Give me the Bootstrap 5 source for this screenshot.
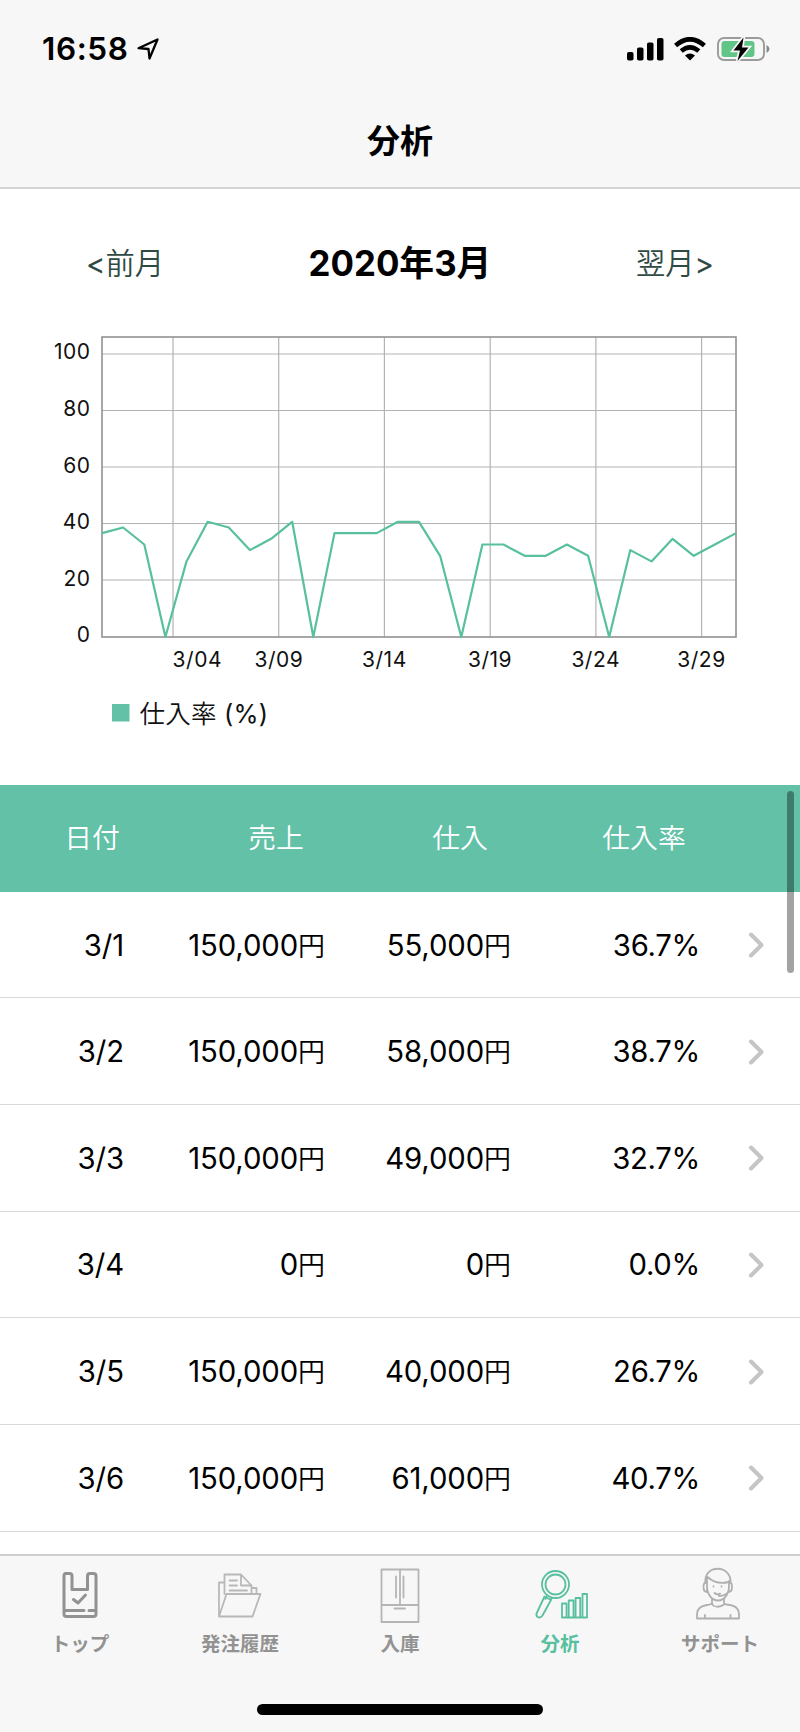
<!DOCTYPE html>
<html lang="ja">
<head>
<meta charset="utf-8">
<meta name="viewport" content="width=device-width, initial-scale=1">
<title>分析</title>
<link href="https://cdn.jsdelivr.net/npm/bootstrap@5.3.0/dist/css/bootstrap.min.css" rel="stylesheet">
<style>
  :root { --mint: #63c1a7; --mint-line: #58bf9f; --bar: #f7f7f7; }
  body { font-family: Inter, "Noto Sans CJK JP", sans-serif; color: #000; width: 800px; height: 1732px; overflow: hidden; background: #fff; }
  svg { display: block; flex: none; }
  .top-bar { height: 189px; background: var(--bar); border-bottom: 2px solid #d5d5d5; }
  .status-row { height: 98px; padding: 0 30px 0 42px; }
  .clock { font-size: 31.5px; font-weight: 600; line-height: 1; letter-spacing: .6px; }
  .page-title { font-size: 33px; font-weight: 700; line-height: 1; padding-top: 27px; }
  .month-row { height: 150px; padding: 0 86px 0 86px; font-size: 29.3px; color: #2f4a42; font-weight: 350; }
  .month-row b { font-weight: 400; }
  .month-row h2 { font-size: 34.8px; font-weight: 700; color: #000; }
  .chart-box { height: 446px; }
  .chart-box text { font-size: 21px; letter-spacing: .5px; fill: #111; }
  .grid-row { display: grid; grid-template-columns: repeat(4, 184px) 64px; align-items: center; height: 106.67px; }
  .head-row { background: var(--mint); color: #fff; font-size: 27.8px; font-weight: 350; text-align: center; padding-top: 2px; }
  .data-row { border-bottom: 1.5px solid #dadada; padding-top: 2px; font-size: 29.3px; text-align: right; letter-spacing: -.1px; }
  .data-row small { font-size: 27px; font-weight: 350; }
  .data-row > :nth-child(1) { padding-right: 60px; }
  .data-row > :nth-child(2) { padding-right: 43px; }
  .data-row > :nth-child(3) { padding-right: 41px; }
  .data-row > :nth-child(4) { padding-right: 36px; letter-spacing: -.3px; }
  .data-row svg { margin-left: 12px; margin-bottom: 1px; }
  .scroll-area { height: 769px; overflow: hidden; }
  .scroll-thumb { right: 6px; top: 6px; width: 7px; height: 182px; border-radius: 4px; background: rgba(0,0,0,.36); }
  .tab-bar { height: 178px; background: var(--bar); border-top: 2px solid #cfcfcf; }
  .tab-item { width: 160px; color: #929292; font-size: 19.5px; font-weight: 700; line-height: 28px; text-decoration: none; }
  .tab-item.active { color: var(--mint-line); }
  .tab-item svg { fill: none; stroke-linecap: round; stroke-linejoin: round; }
  .home-bar { width: 286px; height: 11px; border-radius: 6px; background: #000; margin-top: 46px; }
</style>
</head>
<body class="d-flex flex-column">
<header class="top-bar flex-shrink-0">
  <div class="status-row d-flex align-items-center justify-content-between">
    <div class="d-flex align-items-center">
      <span class="clock">16:58</span>
      <svg class="ms-2" width="24" height="24" viewBox="0 0 24 24"><path d="M1.500 11.200 20.500 2.500 12.500 21.500 11.500 12Z" fill="none" stroke="#000" stroke-width="2.300" stroke-linejoin="round"/></svg>
    </div>
    <div class="d-flex align-items-center">
      <svg width="37" height="24" viewBox="0 0 37 24"><rect x="0" y="15" width="6.500" height="8.500" rx="1.800"/><rect x="10" y="10.500" width="6.500" height="13" rx="1.800"/><rect x="20" y="5.500" width="6.500" height="18" rx="1.800"/><rect x="30" y="1" width="6.500" height="22.500" rx="1.800"/></svg>
      <svg class="ms-2" width="36" height="24" viewBox="0 0 36 24"><g fill="none" stroke="#000" stroke-width="4.600"><path d="M3.600 8.500Q18-4 32.400 8.500"/><path d="M9.200 14Q18 6.600 26.800 14"/></g><path d="M13 18.500Q18 14.500 23 18.500L18 23.500Z"/></svg>
      <svg class="ms-2" width="54" height="28" viewBox="0 0 54 28"><rect x="2" y="3" width="46" height="22" rx="6" fill="none" stroke="#9b9b9b" stroke-width="1.900"/><rect x="5.500" y="6" width="33" height="16" rx="3.200" fill="#62c588"/><path d="M50.500 10q3 1.500 3 4t-3 4Z" fill="#8a8a8a"/><path d="M27.500 2.500 17.500 15.500H24L21.500 26 32.500 12.500H26Z" stroke="#f7f7f7" stroke-width="3.500" paint-order="stroke"/></svg>
    </div>
  </div>
  <h1 class="page-title text-center m-0">分析</h1>
</header>

<nav class="month-row d-flex align-items-center justify-content-between flex-shrink-0">
  <span><b>&lt;</b>前月</span><h2 class="m-0">2020年3月</h2><span>翌月<b>&gt;</b></span>
</nav>

<section class="chart-box flex-shrink-0">
  <svg width="800" height="446" viewBox="0 339 800 446" style="overflow:visible">
    <g stroke="#b3b3b3" stroke-width="1.200">
      <path d="M102 354H736M102 410.500H736M102 467H736M102 523.500H736M102 580H736"/>
      <path d="M173 337V637M278.700 337V637M384.400 337V637M490.200 337V637M595.900 337V637M701.600 337V637"/>
    </g>
    <rect x="102" y="337" width="634" height="300" fill="none" stroke="#929292" stroke-width="1.600"/>
    <polyline id="rate" fill="none" stroke="#58bf9f" stroke-width="2.200" stroke-linejoin="round"/>
    <g text-anchor="end">
      <text x="90.500" y="359">100</text><text x="90.500" y="416">80</text><text x="90.500" y="473">60</text><text x="90.500" y="529">40</text><text x="90.500" y="586">20</text><text x="90.500" y="642">0</text>
    </g>
    <g text-anchor="middle">
      <text x="197.300" y="666.500">3/04</text><text x="278.900" y="666.500">3/09</text><text x="384.400" y="666.500">3/14</text><text x="490" y="666.500">3/19</text><text x="595.700" y="666.500">3/24</text><text x="701.500" y="666.500">3/29</text>
    </g>
    <rect x="112" y="704" width="17.500" height="17.500" fill="#63c1a7"/>
    <text x="139.500" y="723" style="font-size:25.500px;letter-spacing:.2px;font-weight:350">仕入率 <tspan font-weight="400">(%)</tspan></text>
  </svg>
</section>

<main class="scroll-area position-relative flex-shrink-0">
  <div class="grid-row head-row"><span>日付</span><span>売上</span><span>仕入</span><span>仕入率</span></div>
  <div id="rows"></div>
  <div class="scroll-thumb position-absolute"></div>
</main>

<footer class="tab-bar flex-shrink-0">
  <nav class="d-flex">
    <a class="tab-item d-flex flex-column align-items-center" href="#">
      <svg width="80" height="74" viewBox="40 1556 80 74" stroke="#929292" stroke-width="3"><path d="M65 1573.500H69.500Q72 1573.500 72 1576V1589.500H87.500V1576Q87.500 1573.500 90 1573.500H93.500Q96 1573.500 96 1576V1614Q96 1616.500 93.500 1616.500H66.500Q64 1616.500 64 1614V1576Q64 1573.500 66 1573.500ZM64 1610.500H84M89 1610.500H95M73.500 1599.500 78 1603 85.500 1595"/></svg>
      トップ</a>
    <a class="tab-item d-flex flex-column align-items-center" href="#">
      <svg width="80" height="74" viewBox="200 1556 80 74" stroke="#b8b8b8" stroke-width="1.800"><path d="M224.500 1594V1574.500H241L251.500 1585.500V1594M241 1574.500V1585.500H251.500M224.500 1582.500H219V1616.500H252.500L260.500 1594H226.500L219 1616.500M251.500 1588H256.500V1594M229.500 1580.500H237M229.500 1585.500H237M229.500 1590.500H247"/></svg>
      発注履歴</a>
    <a class="tab-item d-flex flex-column align-items-center" href="#">
      <svg width="80" height="74" viewBox="360 1556 80 74" stroke="#b5b5b5" stroke-width="1.800"><path d="M381.500 1569.500H418.500V1622H381.500ZM381.500 1605H418.500M400 1569.500V1605M396 1576.500V1597.500M403.500 1576.500V1597.500M394.500 1608.500H405"/></svg>
      入庫</a>
    <a class="tab-item active d-flex flex-column align-items-center" href="#">
      <svg width="80" height="74" viewBox="520 1556 80 74" stroke="#58bf9f" stroke-width="1.800"><circle cx="555.500" cy="1584.500" r="13.500"/><circle cx="555.500" cy="1584.500" r="10"/><path d="M547 1595.500 545.500 1599M552 1597.500 550.500 1601M544.500 1596.500 551 1600 542.500 1615.500Q540.500 1618.500 537.500 1617Q535.500 1615 537 1612.500ZM562 1617.500V1603.500H566.500V1617.500M568.700 1617.500V1600.500H573.500V1617.500M575.600 1617.500V1598H580.200V1617.500M582.500 1617.500V1594H587V1617.500H562"/></svg>
      分析</a>
    <a class="tab-item d-flex flex-column align-items-center" href="#">
      <svg width="80" height="74" viewBox="680 1556 80 74" stroke="#b0b0b0" stroke-width="1.800"><path d="M705.500 1583C703 1564 732 1564 730.500 1583M707.500 1577Q716 1585 729 1582M707 1577V1584C706 1606 730 1606 729 1584V1581M707 1582Q703.500 1582 703.500 1587T707 1592ZM729 1582Q732 1582 732 1587T728.500 1592M729 1591Q726 1596 719 1596M714.500 1593Q717.500 1595.500 720 1593.500M712 1599V1603Q711.500 1604.500 707 1605Q697 1606.500 697 1614V1618.500H739V1614Q739 1606.500 730 1605Q724 1604.500 724 1603V1599M716 1606.500Q720 1607.500 724 1604.500M712 1603Q712 1605 714 1606M705 1615V1618M730.500 1615V1618"/><path d="M713.500 1586.200V1586.500M721.500 1586.200V1586.500"/></svg>
      サポート</a>
  </nav>
  <div class="home-bar mx-auto"></div>
</footer>

<script src="https://cdn.jsdelivr.net/npm/bootstrap@5.3.0/dist/js/bootstrap.bundle.min.js"></script>
<script>
  // Daily purchase rate, 3/1 to 3/31
  const rates = [36.7,38.7,32.7,0,26.7,40.7,38.7,30.7,34.7,40.7,0,36.7,36.7,36.7,40.7,40.7,28.7,0,32.7,32.7,28.7,28.7,32.7,28.7,0,30.7,26.7,34.7,28.7,32.7,36.7];
  document.getElementById('rate').setAttribute('points',
    rates.map((v, i) => (102 + i * 634 / 30).toFixed(1) + ',' + (637 - v * 2.83).toFixed(1)).join(' '));
  const days = [['3/1','150,000','55,000','36.7%'],['3/2','150,000','58,000','38.7%'],['3/3','150,000','49,000','32.7%'],['3/4','0','0','0.0%'],['3/5','150,000','40,000','26.7%'],['3/6','150,000','61,000','40.7%']];
  document.getElementById('rows').innerHTML = days.map(d =>
    `<div class="grid-row data-row"><span>${d[0]}</span><span>${d[1]}<small>円</small></span><span>${d[2]}<small>円</small></span><span>${d[3]}</span><svg width="18" height="28" viewBox="0 0 18 28"><path d="M3 3.500 13.500 14 3 24.500" fill="none" stroke="#c5c5c7" stroke-width="4" stroke-linecap="round" stroke-linejoin="round"/></svg></div>`).join('');
</script>
</body>
</html>
